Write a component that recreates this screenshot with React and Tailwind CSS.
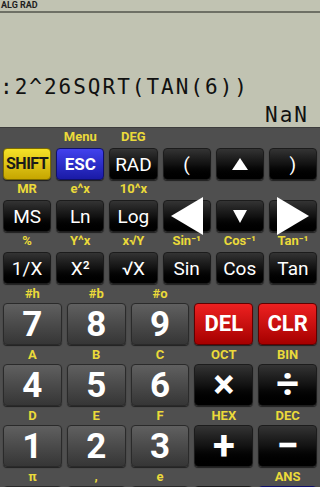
// Scientific calculator keypad: LCD display on top, six small function
// rows and big numeric rows below, each key with a yellow shift label.

const FONT = { fontFamily: 'Roboto, "Liberation Sans", sans-serif' };
const MONO = { fontFamily: '"DejaVu Sans Mono", "Liberation Mono", monospace' };

function Tri({ dir, w, h }) {
  const pts = {
    up: `0,${h} ${w / 2},0 ${w},${h}`,
    down: `0,0 ${w},0 ${w / 2},${h}`,
    left: `${w},0 ${w},${h} 0,${h / 2}`,
    right: `0,0 ${w},${h / 2} 0,${h}`,
  }[dir];
  return (
    <svg width={w} height={h} viewBox={`0 0 ${w} ${h}`} className="block overflow-visible">
      <polygon points={pts} fill="#fff" />
    </svg>
  );
}

const variants = {
  black: 'bg-gradient-to-b from-[#343434] via-[#121212] to-[#000] border-[#1c1c1c] text-white',
  grey: 'bg-gradient-to-b from-[#606060] to-[#363636] border-[#2a2a2a] text-white',
  yellow: 'bg-gradient-to-b from-[#f6e226] to-[#c6a600] border-[#7d6b00] text-[#1a1a1a]',
  blue: 'bg-gradient-to-b from-[#4242ee] to-[#1a1aa6] border-[#10106a] text-white',
  red: 'bg-gradient-to-b from-[#ee2020] to-[#a60000] border-[#600000] text-white',
};

const smallRows = [
  [
    { top: '', text: 'SHIFT', v: 'yellow', cls: 'text-[16px] font-bold tracking-[-0.5px]' },
    { top: 'Menu', text: 'ESC', v: 'blue', cls: 'text-[17px] font-bold' },
    { top: 'DEG', text: 'RAD' },
    { top: '', text: '(' },
    { top: '', icon: <Tri dir="up" w={16} h={12} /> },
    { top: '', text: ')' },
  ],
  [
    { top: 'MR', text: 'MS' },
    { top: 'e^x', text: 'Ln' },
    { top: '10^x', text: 'Log' },
    { top: '', icon: <Tri dir="left" w={32} h={38} /> },
    { top: '', icon: <Tri dir="down" w={14} h={13} /> },
    { top: '', icon: <Tri dir="right" w={32} h={38} /> },
  ],
  [
    { top: '%', text: '1/X' },
    { top: 'Y^x', text: 'X²' },
    { top: 'x√Y', text: '√X' },
    { top: 'Sin⁻¹', text: 'Sin' },
    { top: 'Cos⁻¹', text: 'Cos' },
    { top: 'Tan⁻¹', text: 'Tan' },
  ],
];

// last row sits below the fold: only its labels and a sliver of the keys show
const bigRows = [
  [
    { top: '#h', text: '7', v: 'grey' },
    { top: '#b', text: '8', v: 'grey' },
    { top: '#o', text: '9', v: 'grey' },
    { top: '', text: 'DEL', v: 'red', cls: 'text-[22px] font-bold' },
    { top: '', text: 'CLR', v: 'red', cls: 'text-[22px] font-bold' },
  ],
  [
    { top: 'A', text: '4', v: 'grey' },
    { top: 'B', text: '5', v: 'grey' },
    { top: 'C', text: '6', v: 'grey' },
    { top: 'OCT', text: '×', cls: 'text-[40px] font-bold' },
    { top: 'BIN', text: '÷', cls: 'text-[40px] font-bold' },
  ],
  [
    { top: 'D', text: '1', v: 'grey' },
    { top: 'E', text: '2', v: 'grey' },
    { top: 'F', text: '3', v: 'grey' },
    { top: 'HEX', text: '+', cls: 'text-[40px] font-bold' },
    { top: 'DEC', text: '−', cls: 'text-[40px] font-bold' },
  ],
  [
    { top: 'π', text: '', v: 'grey' },
    { top: ',', text: '', v: 'grey' },
    { top: 'e', text: '', v: 'grey' },
    { top: '', text: '' },
    { top: 'ANS', text: '', v: 'blue' },
  ],
];

function Key({ k, big }) {
  const base = variants[k.v || 'black'];
  const size = big ? 'h-[42px]' : 'h-[32px]';
  const txt = k.cls || (big ? 'text-[35px] font-bold' : 'text-[19px]');
  return (
    <div className="flex flex-col">
      <div
        className={`flex items-center justify-center text-[13px] font-bold leading-none text-[#ebda3a] ${big ? 'h-[19px]' : 'h-[20px] pb-[4px]'}`}
      >
        {k.top}
      </div>
      <div
        className={`${size} ${base} ${txt} flex items-center justify-center rounded-[4px] border leading-none shadow-[0_1px_1px_rgba(0,0,0,0.6)]`}
      >
        {k.icon || k.text}
      </div>
    </div>
  );
}

export default function App() {
  return (
    <div className="w-[320px] h-[487px] overflow-hidden bg-[#4f4f4f]" style={FONT}>
      <div className="h-[128px] bg-[#c1c3b2] border-b border-[#3c3c3c] flex flex-col">
        <div className="h-[13px] border-b-2 border-[#6e7065] px-[1px] text-[9px] font-bold leading-[11px] text-[#1e1e1e]">
          ALG RAD
        </div>
        <div
          className="mt-[63px] text-[21px] leading-[22px] tracking-[2px] text-[#111] whitespace-nowrap"
          style={MONO}
        >
          :2^26SQRT(TAN(6))
        </div>
        <div
          className="mt-[6px] pr-[11px] text-right text-[21px] leading-[22px] tracking-[2px] text-[#111]"
          style={MONO}
        >
          NaN
        </div>
      </div>
      <div className="px-[3px]">
        {smallRows.map((row, i) => (
          <div key={i} className="grid grid-cols-6 gap-x-[5px]">
            {row.map((k, j) => (
              <Key key={j} k={k} />
            ))}
          </div>
        ))}
        {bigRows.map((row, i) => (
          <div key={i} className="grid grid-cols-5 gap-x-[5px]">
            {row.map((k, j) => (
              <Key key={j} k={k} big />
            ))}
          </div>
        ))}
      </div>
    </div>
  );
}
